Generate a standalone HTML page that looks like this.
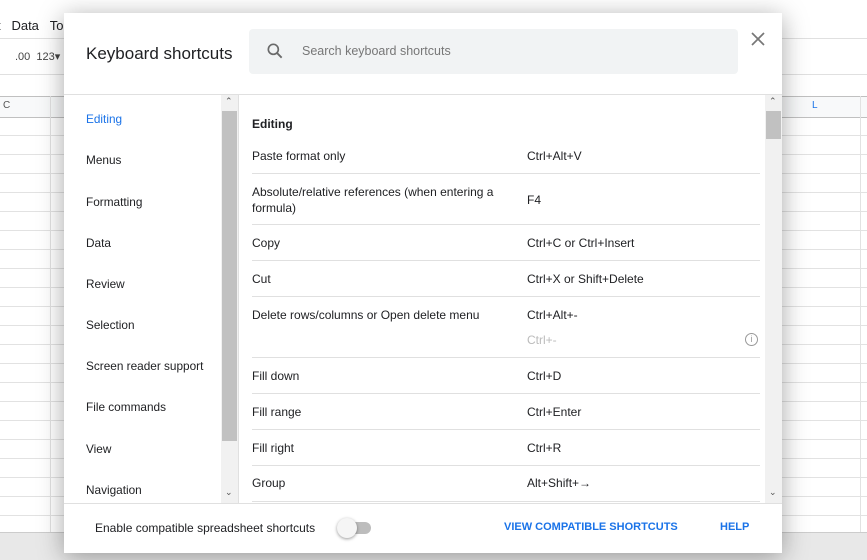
<!DOCTYPE html>
<html><head><style>
body{margin:0;width:867px;height:559px;overflow:hidden;background:#fff;font-family:"Liberation Sans",Arial,sans-serif;position:relative}
.bg{position:absolute;left:0;top:0;width:867px;height:559px}
.dlg{position:absolute;left:64px;top:13px;width:718px;height:540px;background:#fff;box-shadow:0 4px 24px rgba(0,0,0,.35)}
.t{position:absolute;font-size:12px;color:#202124;white-space:nowrap}
.nav{position:absolute;left:22px;font-size:11.8px;color:#202124}
.row{position:absolute;left:188px;width:508px;border-bottom:1px solid #e0e0e0}
</style></head><body>
<div class="bg">
 <div style="position:absolute;left:0;top:0;width:867px;height:38px;border-bottom:1px solid #e0e0e0"></div>
 <div class="t" style="left:-3px;top:18px;font-size:13px">t&nbsp;&nbsp;&nbsp;Data&nbsp;&nbsp;&nbsp;To</div>
 <div class="t" style="left:15px;top:50px;font-size:11px;color:#444">.00&nbsp;&nbsp;123▾</div>
 <div style="position:absolute;left:0;top:74px;width:867px;border-top:1px solid #e0e0e0"></div>
 <div style="position:absolute;left:0;top:96px;width:867px;height:20px;background:#f8f9fa;border-top:1px solid #c0c0c0;border-bottom:1px solid #c0c0c0"></div>
 <div class="t" style="left:3px;top:100px;font-size:10px;color:#555">C</div>
 <div class="t" style="left:812px;top:100px;font-size:10px;color:#1a73e8">L</div>
 <div style="position:absolute;left:0;top:117px;width:867px;height:415px;background:repeating-linear-gradient(to bottom,transparent 0 18px,#e2e2e2 18px 19px)"></div>
 <div style="position:absolute;left:50px;top:96px;height:436px;border-left:1px solid #e2e2e2"></div>
 <div style="position:absolute;left:860px;top:96px;height:436px;border-left:1px solid #e2e2e2"></div>
 <div style="position:absolute;left:0;top:532px;width:867px;height:27px;background:#e8e8e8;border-top:1px solid #ccc"></div>
</div>
<div class="dlg">
 <div class="t" style="left:22px;top:31px;font-size:17px">Keyboard shortcuts</div>
 <div style="position:absolute;left:185px;top:16px;width:489px;height:45px;background:#f1f3f4;border-radius:4px"></div>
 <svg style="position:absolute;left:201px;top:28px" width="20" height="20" viewBox="0 0 24 24"><circle cx="10" cy="10" r="6" fill="none" stroke="#6a6a6a" stroke-width="2"/><path d="M14.5 14.5l5.5 5.5" stroke="#6a6a6a" stroke-width="2.2"/></svg>
 <div class="t" style="left:238px;top:31px;color:#777;font-size:12.5px">Search keyboard shortcuts</div>
 <svg style="position:absolute;left:687px;top:19px" width="14" height="14" viewBox="0 0 14 14"><path d="M1 1l12 12M13 1L1 13" stroke="#777" stroke-width="1.7"/></svg>
 <div style="position:absolute;left:0;top:81px;width:718px;border-top:1px solid #e0e0e0"></div>
 <div style="position:absolute;left:157px;top:82px;width:17px;height:408px;background:#f1f1f1"></div>
 <div style="position:absolute;left:158px;top:98px;width:15px;height:330px;background:#c1c1c1"></div>
 <div class="t" style="left:161px;top:83px;font-size:9px;color:#555">⌃</div>
 <div class="t" style="left:161px;top:474px;font-size:9px;color:#555">⌄</div>
 <div style="position:absolute;left:174px;top:82px;height:408px;border-left:1px solid #e0e0e0"></div>
 <div class="nav" style="top:99px;color:#1a73e8">Editing</div>
 <div class="nav" style="top:140px">Menus</div>
 <div class="nav" style="top:182px">Formatting</div>
 <div class="nav" style="top:223px">Data</div>
 <div class="nav" style="top:264px">Review</div>
 <div class="nav" style="top:305px">Selection</div>
 <div class="nav" style="top:346px">Screen reader support</div>
 <div class="nav" style="top:387px">File commands</div>
 <div class="nav" style="top:429px">View</div>
 <div class="nav" style="top:470px">Navigation</div>
 <div style="position:absolute;left:701px;top:82px;width:17px;height:408px;background:#f1f1f1"></div>
 <div style="position:absolute;left:702px;top:98px;width:15px;height:28px;background:#c1c1c1"></div>
 <div class="t" style="left:705px;top:83px;font-size:9px;color:#555">⌃</div>
 <div class="t" style="left:705px;top:474px;font-size:9px;color:#555">⌄</div>
 <div class="t" style="left:188px;top:104px;font-weight:bold">Editing</div>
 <div class="row" style="top:124px;height:36px"></div>
 <div class="t" style="left:188px;top:136px">Paste format only</div><div class="t" style="left:463px;top:136px">Ctrl+Alt+V</div>
 <div class="row" style="top:160px;height:51px"></div>
 <div class="t" style="left:188px;top:171px;line-height:16px">Absolute/relative references (when entering a<br>formula)</div><div class="t" style="left:463px;top:180px">F4</div>
 <div class="row" style="top:211px;height:36px"></div>
 <div class="t" style="left:188px;top:223px">Copy</div><div class="t" style="left:463px;top:223px">Ctrl+C or Ctrl+Insert</div>
 <div class="row" style="top:247px;height:36px"></div>
 <div class="t" style="left:188px;top:259px">Cut</div><div class="t" style="left:463px;top:259px">Ctrl+X or Shift+Delete</div>
 <div class="row" style="top:283px;height:61px"></div>
 <div class="t" style="left:188px;top:295px">Delete rows/columns or Open delete menu</div><div class="t" style="left:463px;top:295px">Ctrl+Alt+-</div>
 <div class="t" style="left:463px;top:320px;color:#bbb">Ctrl+-</div>
 <div style="position:absolute;left:681px;top:320px;width:11px;height:11px;border:1px solid #999;border-radius:50%;font-size:9px;color:#999;text-align:center;line-height:11px">i</div>
 <div class="row" style="top:344px;height:36px"></div>
 <div class="t" style="left:188px;top:356px">Fill down</div><div class="t" style="left:463px;top:356px">Ctrl+D</div>
 <div class="row" style="top:380px;height:36px"></div>
 <div class="t" style="left:188px;top:392px">Fill range</div><div class="t" style="left:463px;top:392px">Ctrl+Enter</div>
 <div class="row" style="top:416px;height:36px"></div>
 <div class="t" style="left:188px;top:428px">Fill right</div><div class="t" style="left:463px;top:428px">Ctrl+R</div>
 <div class="row" style="top:452px;height:36px"></div>
 <div class="t" style="left:188px;top:463px">Group</div><div class="t" style="left:463px;top:463px">Alt+Shift+→</div>
 <div style="position:absolute;left:0;top:490px;width:718px;border-top:1px solid #e0e0e0"></div>
 <div class="t" style="left:31px;top:508px">Enable compatible spreadsheet shortcuts</div>
 <div style="position:absolute;left:278px;top:509px;width:29px;height:12px;border-radius:6px;background:#bdbdbd"></div>
 <div style="position:absolute;left:273px;top:505px;width:20px;height:20px;border-radius:50%;background:#f5f5f5;box-shadow:0 1px 3px rgba(0,0,0,.4)"></div>
 <div class="t" style="left:440px;top:508px;font-size:11px;font-weight:bold;color:#1a73e8">VIEW COMPATIBLE SHORTCUTS</div>
 <div class="t" style="left:656px;top:508px;font-size:11px;font-weight:bold;color:#1a73e8">HELP</div>
</div>
</body></html>
